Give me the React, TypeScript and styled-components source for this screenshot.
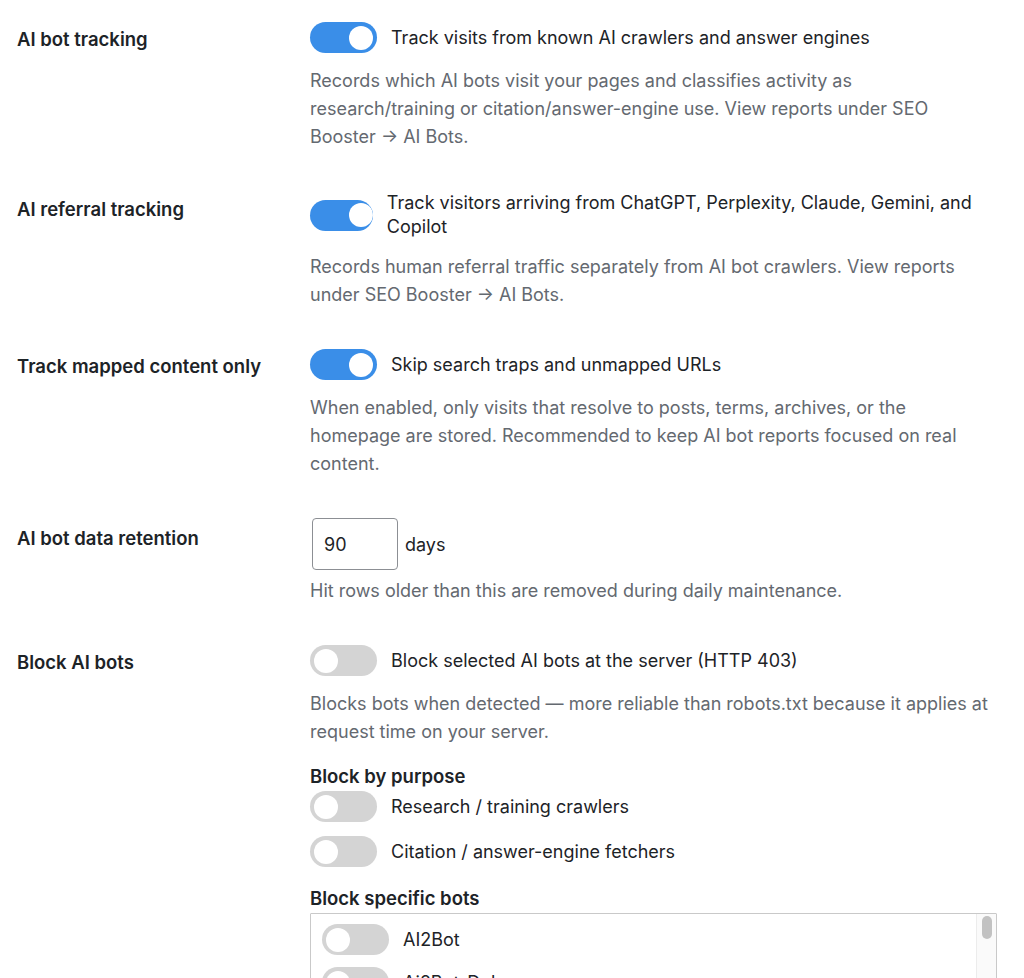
import React from "react";
import styled, { createGlobalStyle } from "styled-components";

const GlobalStyle = createGlobalStyle`
  html, body {
    margin: 0;
    padding: 0;
    background: #ffffff;
  }
  body {
    font-family: Inter, "Noto Sans", "Liberation Sans", sans-serif;
    color: #1d2327;
    -webkit-font-smoothing: antialiased;
  }
  * { box-sizing: border-box; }
`;

const Page = styled.div`
  padding: 22px 0 0 17px;
  width: 1024px;
`;

const FormTable = styled.div`
  display: flex;
  flex-direction: column;
  gap: 40px;
`;

const Row = styled.div`
  display: grid;
  grid-template-columns: 293px 687px;
  align-items: start;
`;

const Label = styled.div<{ $offset?: number }>`
  font-size: 18.5px;
  line-height: 24px;
  font-weight: 600;
  color: #1d2327;
  margin-top: ${(p) => p.$offset ?? 5}px;
`;

const Field = styled.div`
  display: flex;
  flex-direction: column;
`;

const SwitchLine = styled.label`
  display: flex;
  align-items: center;
  gap: 14px;
  min-height: 31px;
  font-size: 18px;
  line-height: 24px;
  color: #1d2327;
`;

const Track = styled.span<{ $on: boolean }>`
  flex: 0 1 67px;
  min-width: 56px;
  position: relative;
  overflow: hidden;
  height: 31px;
  border-radius: 16px;
  background: ${(p) => (p.$on ? "#3a8ee8" : "#d4d4d4")};
`;

const Knob = styled.span<{ $on: boolean }>`
  position: absolute;
  top: 3.5px;
  left: ${(p) => (p.$on ? "39px" : "4px")};
  width: 24px;
  height: 24px;
  border-radius: 50%;
  background: #ffffff;
`;

const Description = styled.p<{ $gap?: number }>`
  margin: ${(p) => p.$gap ?? 14}px 0 0;
  font-size: 18px;
  line-height: 28px;
  color: #646970;
  max-width: 687px;
`;

const SubHeading = styled.div<{ $gap: number }>`
  margin: ${(p) => p.$gap}px 0 3px;
  font-size: 18.5px;
  line-height: 24px;
  font-weight: 600;
  color: #1d2327;
`;

const SwitchStack = styled.div`
  display: flex;
  flex-direction: column;
  gap: 14px;
`;

const InputLine = styled.div`
  display: flex;
  align-items: center;
  gap: 7px;
  font-size: 18px;
  color: #1d2327;
`;

const NumberInput = styled.input`
  width: 86px;
  height: 52px;
  margin: 0 0 0 2px;
  padding: 0 11px;
  border: 1px solid #8c8f94;
  border-radius: 4px;
  font-family: inherit;
  font-size: 18px;
  color: #1d2327;
  background: #fff;
  outline: none;
  -moz-appearance: textfield;
  &::-webkit-inner-spin-button,
  &::-webkit-outer-spin-button {
    -webkit-appearance: none;
    margin: 0;
  }
`;

/* Scrollable checklist of individual bots, with a classic scroll rail drawn over its right edge */
const BotBox = styled.div`
  position: relative;
  width: 687px;
  height: 200px;
  border: 1px solid #c9c9c9;
  border-radius: 1px;
`;

const BotList = styled.div`
  height: 100%;
  overflow-y: auto;
  scrollbar-width: none;
  padding: 10px 32px 10px 11px;
  display: flex;
  flex-direction: column;
  gap: 12px;
  &::-webkit-scrollbar { display: none; }
`;

const ScrollRail = styled.div`
  position: absolute;
  top: 0;
  right: 0;
  bottom: 0;
  width: 20px;
  background: #fafafa;
  border-left: 1px solid #ececec;
  display: flex;
  justify-content: center;
  padding-top: 2px;
`;

const ScrollThumb = styled.div`
  width: 10px;
  height: 23px;
  border-radius: 5px;
  background: #c2c2c2;
`;

function Switch({ on, children }: { on: boolean; children: React.ReactNode }) {
  return (
    <SwitchLine>
      <Track $on={on} role="switch" aria-checked={on}>
        <Knob $on={on} />
      </Track>
      <span>{children}</span>
    </SwitchLine>
  );
}

const bots = [
  "AI2Bot", "Ai2Bot-Dolma", "Amazonbot", "anthropic-ai", "Applebot",
  "Applebot-Extended", "Bytespider", "CCBot", "ChatGPT-User", "Claude-SearchBot",
  "Claude-User", "Claude-Web", "ClaudeBot", "cohere-ai", "cohere-training-data-crawler",
  "Diffbot", "DuckAssistBot", "FacebookBot", "FriendlyCrawler", "Google-CloudVertexBot",
  "Google-Extended", "GoogleOther", "GPTBot", "iaskspider", "ICC-Crawler",
  "ImagesiftBot", "Kangaroo Bot", "Meta-ExternalAgent", "Meta-ExternalFetcher", "MistralAI-User",
  "OAI-SearchBot", "omgili", "PanguBot", "Perplexity-User", "PerplexityBot",
  "PetalBot", "Scrapy", "Sidetrade indexer bot", "Timpibot", "YouBot",
];

export default function App() {
  return (
    <>
      <GlobalStyle />
      <Page>
        <FormTable>
          <Row>
            <Label>AI bot tracking</Label>
            <Field>
              <Switch on>Track visits from known AI crawlers and answer engines</Switch>
              <Description>
                Records which AI bots visit your pages and classifies activity as
                research/training or citation/answer-engine use. View reports under SEO
                Booster → AI Bots.
              </Description>
            </Field>
          </Row>

          <Row>
            <Label $offset={6}>AI referral tracking</Label>
            <Field>
              <Switch on>
                Track visitors arriving from ChatGPT, Perplexity, Claude, Gemini, and
                Copilot
              </Switch>
              <Description>
                Records human referral traffic separately from AI bot crawlers. View reports
                under SEO Booster → AI Bots.
              </Description>
            </Field>
          </Row>

          <Row>
            <Label>Track mapped content only</Label>
            <Field>
              <Switch on>Skip search traps and unmapped URLs</Switch>
              <Description>
                When enabled, only visits that resolve to posts, terms, archives, or the
                homepage are stored. Recommended to keep AI bot reports focused on real
                content.
              </Description>
            </Field>
          </Row>

          <Row>
            <Label $offset={8}>AI bot data retention</Label>
            <Field>
              <InputLine>
                <NumberInput type="number" defaultValue={90} />
                <span>days</span>
              </InputLine>
              <Description $gap={7}>
                Hit rows older than this are removed during daily maintenance.
              </Description>
            </Field>
          </Row>

          <Row>
            <Label>Block AI bots</Label>
            <Field>
              <Switch on={false}>Block selected AI bots at the server (HTTP 403)</Switch>
              <Description>
                Blocks bots when detected — more reliable than robots.txt because it applies at
                request time on your server.
              </Description>

              <SubHeading $gap={18}>Block by purpose</SubHeading>
              <SwitchStack>
                <Switch on={false}>Research / training crawlers</Switch>
                <Switch on={false}>Citation / answer-engine fetchers</Switch>
              </SwitchStack>

              <SubHeading $gap={19}>Block specific bots</SubHeading>
              <BotBox>
                <BotList>
                  {bots.map((b) => (
                    <Switch key={b} on={false}>{b}</Switch>
                  ))}
                </BotList>
                <ScrollRail>
                  <ScrollThumb />
                </ScrollRail>
              </BotBox>
            </Field>
          </Row>
        </FormTable>
      </Page>
    </>
  );
}
